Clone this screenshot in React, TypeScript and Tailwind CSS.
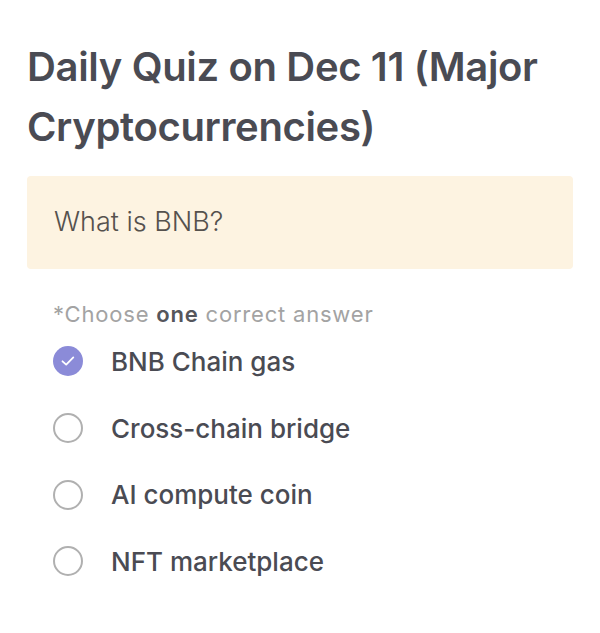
import React from "react";

const options = ["BNB Chain gas", "Cross-chain bridge", "AI compute coin", "NFT marketplace"];

export default function App() {
  return (
    <div className="w-[600px] h-[633px] bg-white px-[27px] pt-[37px]" style={{ fontFamily: "Inter, 'Noto Sans', sans-serif" }}>
      <h1 className="text-[40px] leading-[60px] font-semibold text-[#4a4b53] tracking-[-0.35px]">
        Daily Quiz on Dec 11 (Major Cryptocurrencies)
      </h1>
      <div className="mt-[19px] h-[93px] rounded-[4px] bg-[#fdf3e1] flex items-center pl-[27px]">
        <span className="text-[27px] font-light text-[#55514d]">What is BNB?</span>
      </div>
      <div className="mt-[31px] pl-[26px] text-[22px] tracking-[0.8px] text-[#a3a3a3] leading-[28px]">
        *Choose <span className="font-semibold text-[#55565c]">one</span> correct answer
      </div>
      <div className="mt-[0px] flex flex-col">
        {options.map((o, i) => (
          <div key={o} className="h-[66.7px] flex items-center pl-[26px]">
            {i === 0 ? (
              <div className="w-[30px] h-[30px] rounded-full bg-[#8b8bd8] flex items-center justify-center">
                <svg width="20" height="20" viewBox="0 0 20 20" fill="none">
                  <path d="M4.5 10.3 L8.2 13.6 L15.3 6.4" stroke="white" strokeWidth="1.8" strokeLinecap="round" strokeLinejoin="round" />
                </svg>
              </div>
            ) : (
              <div className="w-[30px] h-[30px] rounded-full border-[2px] border-[#b0b0b0]" />
            )}
            <span className="ml-[28px] text-[26px] font-medium text-[#4a4b53]">{o}</span>
          </div>
        ))}
      </div>
    </div>
  );
}
